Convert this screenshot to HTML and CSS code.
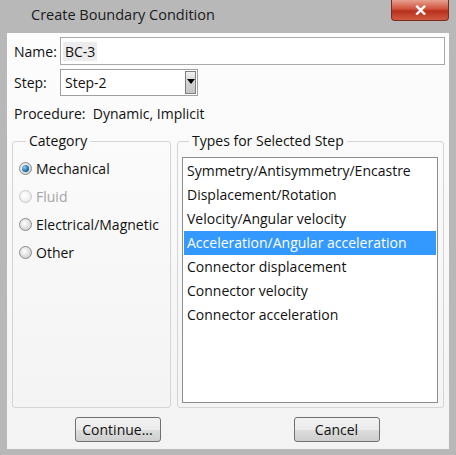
FILE: index.html
```html
<!DOCTYPE html>
<html>
<head>
<meta charset="utf-8">
<title>Create Boundary Condition</title>
<link rel="stylesheet" href="styles.css">
</head>
<body>
<div class="window">
  <div class="titlebar">
    <span class="title">Create Boundary Condition</span>
    <span class="closebtn">&#10005;</span>
  </div>

  <div class="client">
    <div class="row">
      <span class="lbl">Name:</span>
      <div class="textbox"><span class="sel">BC-3</span></div>
    </div>
    <div class="row step">
      <span class="lbl">Step:</span>
      <div class="combo">
        <span class="combotext">Step-2</span>
        <span class="dropbtn"><span class="arrow"></span></span>
      </div>
    </div>
    <div class="procedure">Procedure:&nbsp; Dynamic, Implicit</div>

    <div class="groups">
      <fieldset class="group category">
        <legend>Category</legend>
        <label class="radio"><span class="dot on"></span>Mechanical</label>
        <label class="radio disabled"><span class="dot"></span>Fluid</label>
        <label class="radio"><span class="dot"></span>Electrical/Magnetic</label>
        <label class="radio"><span class="dot"></span>Other</label>
      </fieldset>
      <fieldset class="group types">
        <legend>Types for Selected Step</legend>
        <ul class="listbox">
          <li>Symmetry/Antisymmetry/Encastre</li>
          <li>Displacement/Rotation</li>
          <li>Velocity/Angular velocity</li>
          <li class="selected">Acceleration/Angular acceleration</li>
          <li>Connector displacement</li>
          <li>Connector velocity</li>
          <li>Connector acceleration</li>
        </ul>
      </fieldset>
    </div>

    <div class="buttons">
      <button class="btn">Continue...</button>
      <button class="btn">Cancel</button>
    </div>
  </div>
</div>
</body>
</html>
```

FILE: styles.css
```css
body {
    margin: 0;
    background-color: #b8b8b8;
    font-family: "Open Sans", "Noto Sans", sans-serif;
    font-size: 14px;
    color: #111;
}

.window {
    width: 456px;
    height: 455px;
}

/* title bar */
.titlebar {
    height: 33px;
    display: flex;
    justify-content: space-between;
    align-items: flex-start;
}

.title {
    margin-left: 31px;
    margin-top: 5px;
    font-size: 14.5px;
    color: #1a1a1a;
}

.closebtn {
    width: 58px;
    height: 21px;
    margin-right: 7px;
    border: 1px solid #7a2a22;
    border-top: 0;
    box-sizing: border-box;
    border-radius: 0 0 4px 4px;
    background: linear-gradient(#e7a08f, #d0533d 45%, #b8301c 55%, #cf5a3f);
    color: white;
    font-size: 16px;
    font-weight: bold;
    text-align: center;
    line-height: 20px;
}

/* client area */
.client {
    margin: 0 7px;
    height: 416px;
    box-sizing: border-box;
    padding: 4px 4px 0 7px;
    background: linear-gradient(#fdfdfd, #f3f3f3);
}

.row {
    display: flex;
    align-items: center;
    height: 28px;
}

.row.step {
    margin-top: 4px;
    height: 27px;
}

.lbl {
    width: 46px;
}

.textbox {
    flex: 1;
    height: 28px;
    box-sizing: border-box;
    border: 1px solid #a9a9a9;
    background: white;
    padding-left: 2px;
    display: flex;
    align-items: center;
}

.sel {
    background-color: #ececec;
    padding: 0 2px;
}

.combo {
    width: 138px;
    height: 27px;
    box-sizing: border-box;
    border: 1px solid #a0a0a0;
    background: white;
    display: flex;
    align-items: center;
    justify-content: space-between;
    padding: 0 1px 0 4px;
}

.dropbtn {
    width: 11px;
    height: 23px;
    box-sizing: border-box;
    border: 1px solid #7f7f7f;
    background: linear-gradient(#f2f2f2, #d8d8d8 40%, #c4c4c4);
    display: flex;
    justify-content: center;
    padding-top: 7px;
}

.arrow {
    width: 0;
    height: 0;
    border-left: 4px solid transparent;
    border-right: 4px solid transparent;
    border-top: 5px solid #000;
}

.procedure {
    margin-top: 9px;
    height: 18px;
    line-height: 18px;
}

/* group boxes */
.groups {
    display: grid;
    grid-template-columns: 159px 267px;
    column-gap: 6px;
    margin-top: 10px;
    margin-left: -2px;
}

.group {
    margin: 0;
    height: 275px;
    box-sizing: border-box;
    border: 1px solid #d5d5d5;
    border-radius: 3px;
    padding: 0;
}

.group legend {
    margin-left: 7px;
    padding: 0 3px;
    line-height: 16px;
}

.category {
    padding: 5px 0 0 6px;
}

.radio {
    display: flex;
    align-items: center;
    height: 28px;
}

.radio.disabled {
    color: #a6a6a6;
}

.dot {
    width: 13px;
    height: 13px;
    box-sizing: border-box;
    border-radius: 50%;
    border: 1px solid #8b8b8b;
    background: radial-gradient(circle at 40% 40%, #ffffff, #d4d4d4 70%, #b8b8b8);
    margin-right: 4px;
    display: flex;
    align-items: center;
    justify-content: center;
}

.disabled .dot {
    border-color: #c8c8c8;
    background: radial-gradient(circle at 40% 40%, #ffffff, #ececec 70%, #dddddd);
}

.dot.on::after {
    content: "";
    width: 7px;
    height: 7px;
    border-radius: 50%;
    background: radial-gradient(circle at 35% 35%, #8fd0f5, #1c6ea8 60%, #0d3f70);
}

.types {
    padding: 0 5px 3px 4px;
}

.listbox {
    list-style: none;
    margin: 0;
    margin-top: 8px;
    height: 246px;
    box-sizing: border-box;
    border: 1px solid #8d8d8d;
    background: white;
    padding: 1px;
}

.listbox li {
    height: 24px;
    line-height: 24px;
    padding-left: 3px;
}

.listbox li.selected {
    background-color: #3399ff;
    color: white;
}

/* bottom buttons */
.buttons {
    display: grid;
    grid-template-columns: 1fr 1fr;
    justify-items: center;
    margin-top: 9px;
    margin-left: -6px;
    margin-right: -1px;
}

.btn {
    width: 86px;
    height: 25px;
    border: 1px solid #707070;
    border-radius: 3px;
    background: linear-gradient(#f2f2f2, #ebebeb 50%, #dddddd 51%, #cfcfcf);
    font-family: "Open Sans", "Noto Sans", sans-serif;
    font-size: 14px;
    color: #111;
    padding: 0;
}
```
